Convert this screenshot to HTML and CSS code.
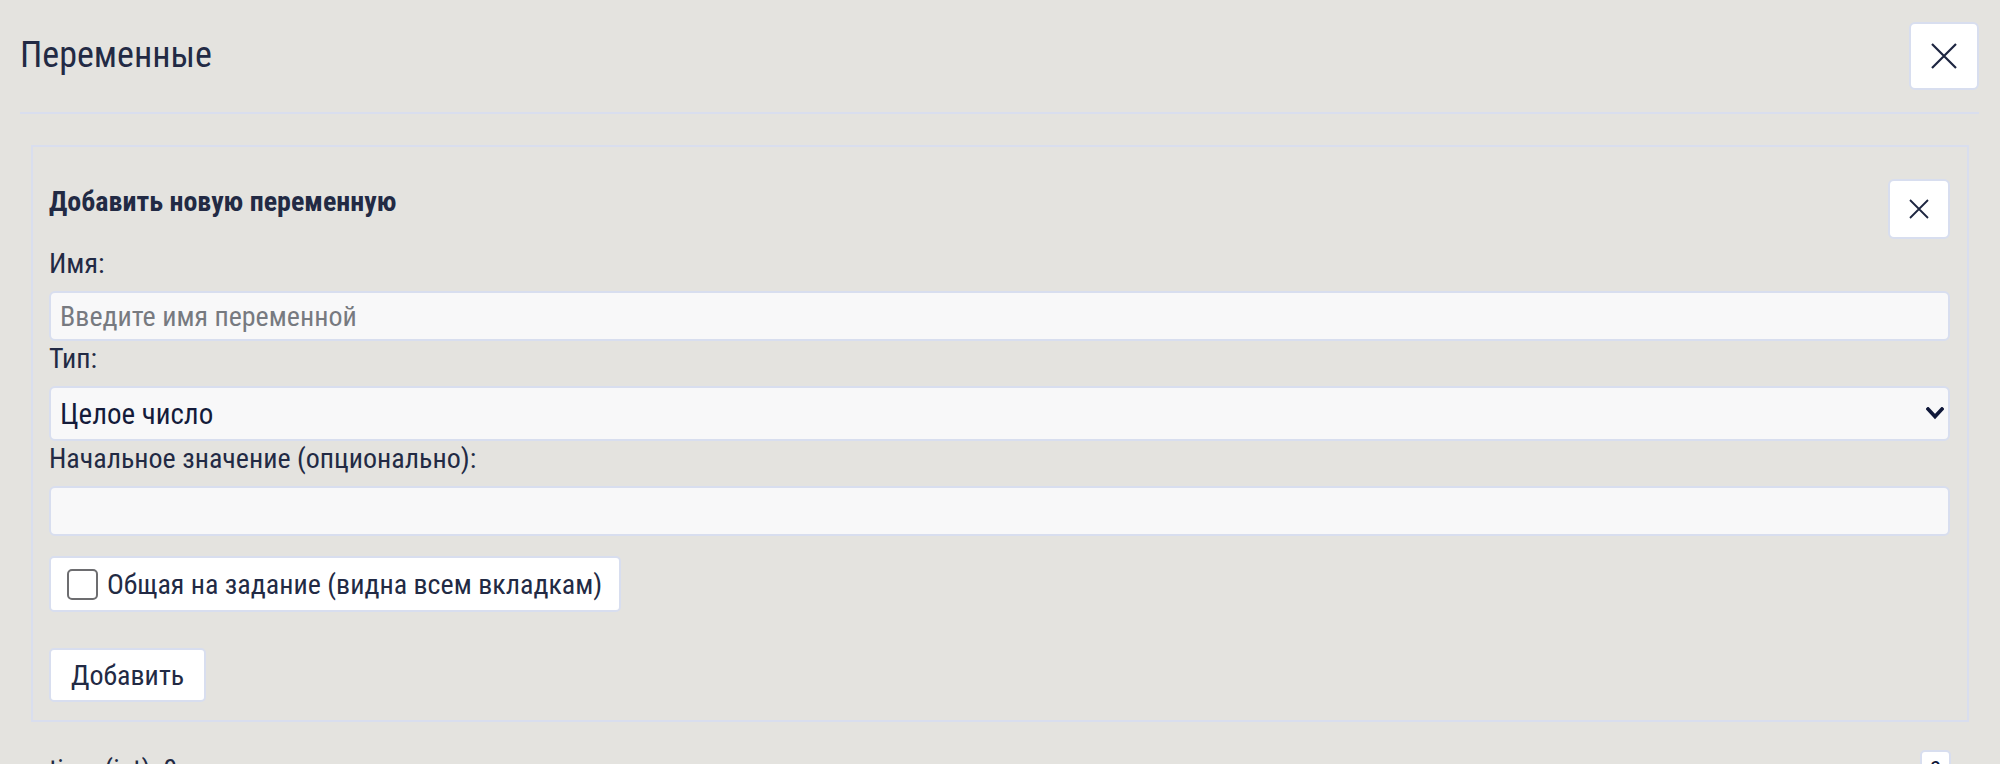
FILE: index.html
```html
<!DOCTYPE html>
<html lang="ru">
<head>
<meta charset="utf-8">
<title>Переменные</title>
<link rel="stylesheet" href="styles.css">
</head>
<body>
<div class="modal">
  <header class="modal-head">
    <h1 class="modal-title">Переменные</h1>
    <button class="btn-close btn-close-lg" type="button" aria-label="Закрыть">
      <svg viewBox="0 0 26 26" width="26" height="26"><path d="M1 1 L25 25 M25 1 L1 25" /></svg>
    </button>
  </header>

  <section class="add-panel">
    <div class="add-head">
      <h2 class="add-title">Добавить новую переменную</h2>
      <button class="btn-close btn-close-sm" type="button" aria-label="Закрыть">
        <svg viewBox="0 0 20 20" width="20" height="20"><path d="M1 1 L19 19 M19 1 L1 19" /></svg>
      </button>
    </div>

    <label class="field-label" for="var-name">Имя:</label>
    <input class="field" id="var-name" type="text" placeholder="Введите имя переменной">

    <label class="field-label" for="var-type">Тип:</label>
    <div class="select-wrap">
      <select class="field field-select" id="var-type">
        <option>Целое число</option>
        <option>Дробное число</option>
        <option>Строка</option>
      </select>
      <svg class="select-arrow" viewBox="0 0 18 13" width="18" height="13"><path d="M2 2 L9 9.5 L16 2" /></svg>
    </div>

    <label class="field-label" for="var-init">Начальное значение (опционально):</label>
    <input class="field" id="var-init" type="text">

    <label class="check-box">
      <input class="check" type="checkbox">
      <span>Общая на задание (видна всем вкладкам)</span>
    </label>

    <div class="actions">
      <button class="btn-add" type="button">Добавить</button>
    </div>
  </section>

  <ul class="var-list">
    <li class="var-item">
      <span class="var-text">time (int): 0</span>
      <button class="btn-mini" type="button">0</button>
    </li>
  </ul>
</div>
</body>
</html>
```

FILE: styles.css
```css
html, body {
  margin: 0;
  height: 100%;
  overflow: hidden;
}

body {
  background: #e4e3df;
  color: #222a44;
  font-family: "Roboto Condensed", Roboto, "Liberation Sans", sans-serif;
  font-stretch: condensed;
}

.modal {
  padding: 22px 21px 0 20px;
}

/* header row */
.modal-head {
  display: flex;
  align-items: center;
  justify-content: space-between;
  padding-bottom: 22px;
  border-bottom: 2px solid #d9deee;
}

.modal-title {
  margin: 0;
  font-size: 36px;
  font-weight: 400;
  line-height: 1.2;
}

.btn-close {
  display: flex;
  align-items: center;
  justify-content: center;
  background: #fff;
  border: 2px solid #d8deef;
  border-radius: 6px;
  padding: 0;
  cursor: pointer;
}

.btn-close svg path {
  fill: none;
  stroke: #1d2540;
  stroke-width: 2.2;
}

.btn-close-lg {
  width: 70px;
  height: 68px;
}

.btn-close-sm {
  width: 62px;
  height: 60px;
}

.btn-close-sm svg path {
  stroke-width: 1.8;
}

/* add-variable panel */
.add-panel {
  margin: 31px 10px 0 11px;
  padding: 32px 17px 18px 16px;
  border: 2px solid #d9deee;
}

.add-head {
  display: flex;
  align-items: flex-start;
  justify-content: space-between;
  margin-bottom: 7px;
}

.add-title {
  margin: 5px 0 0;
  font-size: 28px;
  font-weight: 700;
  line-height: 36px;
}

.field-label {
  display: block;
  font-size: 28px;
  line-height: 36px;
  margin-bottom: 9px;
}

.field {
  display: block;
  box-sizing: border-box;
  width: 100%;
  height: 50px;
  margin: 0;
  padding: 0 9px;
  background: #f8f8f9;
  border: 2px solid #d8deef;
  border-radius: 6px;
  font: inherit;
  font-size: 28px;
  color: #141b3a;
  outline: none;
}

.field::placeholder {
  color: #777a80;
}

.select-wrap {
  position: relative;
}

.field-select {
  height: 55px;
  appearance: none;
  -webkit-appearance: none;
  padding-right: 50px;
  font-size: 29px;
}

.select-arrow {
  position: absolute;
  right: 6px;
  top: 21px;
  pointer-events: none;
}

.select-arrow path {
  fill: none;
  stroke: #10183a;
  stroke-width: 3.6;
  stroke-linecap: square;
}

.check-box {
  display: inline-flex;
  align-items: center;
  gap: 9px;
  box-sizing: border-box;
  height: 56px;
  margin-top: 20px;
  padding: 0 17px 0 16px;
  background: #fff;
  border: 2px solid #d8deef;
  border-radius: 5px;
  font-size: 28px;
}

.check {
  appearance: none;
  -webkit-appearance: none;
  flex: none;
  width: 31px;
  height: 31px;
  margin: 0;
  border: 2px solid #6d6d70;
  border-radius: 5px;
  background: #fff;
}

.actions {
  margin-top: 36px;
}

.btn-add {
  height: 54px;
  padding: 0 20px;
  background: #fff;
  border: 2px solid #d8deef;
  border-radius: 5px;
  font: inherit;
  font-size: 28px;
  color: #222a44;
  cursor: pointer;
}

/* saved variables */
.var-list {
  list-style: none;
  margin: 28px 0 0;
  padding: 0 28px 0 29px;
}

.var-item {
  display: flex;
  align-items: flex-start;
  justify-content: space-between;
}

.var-text {
  font-size: 28px;
  line-height: 40px;
}

.btn-mini {
  width: 31px;
  height: 40px;
  padding: 0;
  background: #fff;
  border: 2px solid #d8deef;
  border-radius: 5px;
  font: inherit;
  font-size: 24px;
  color: #10183a;
}
```
